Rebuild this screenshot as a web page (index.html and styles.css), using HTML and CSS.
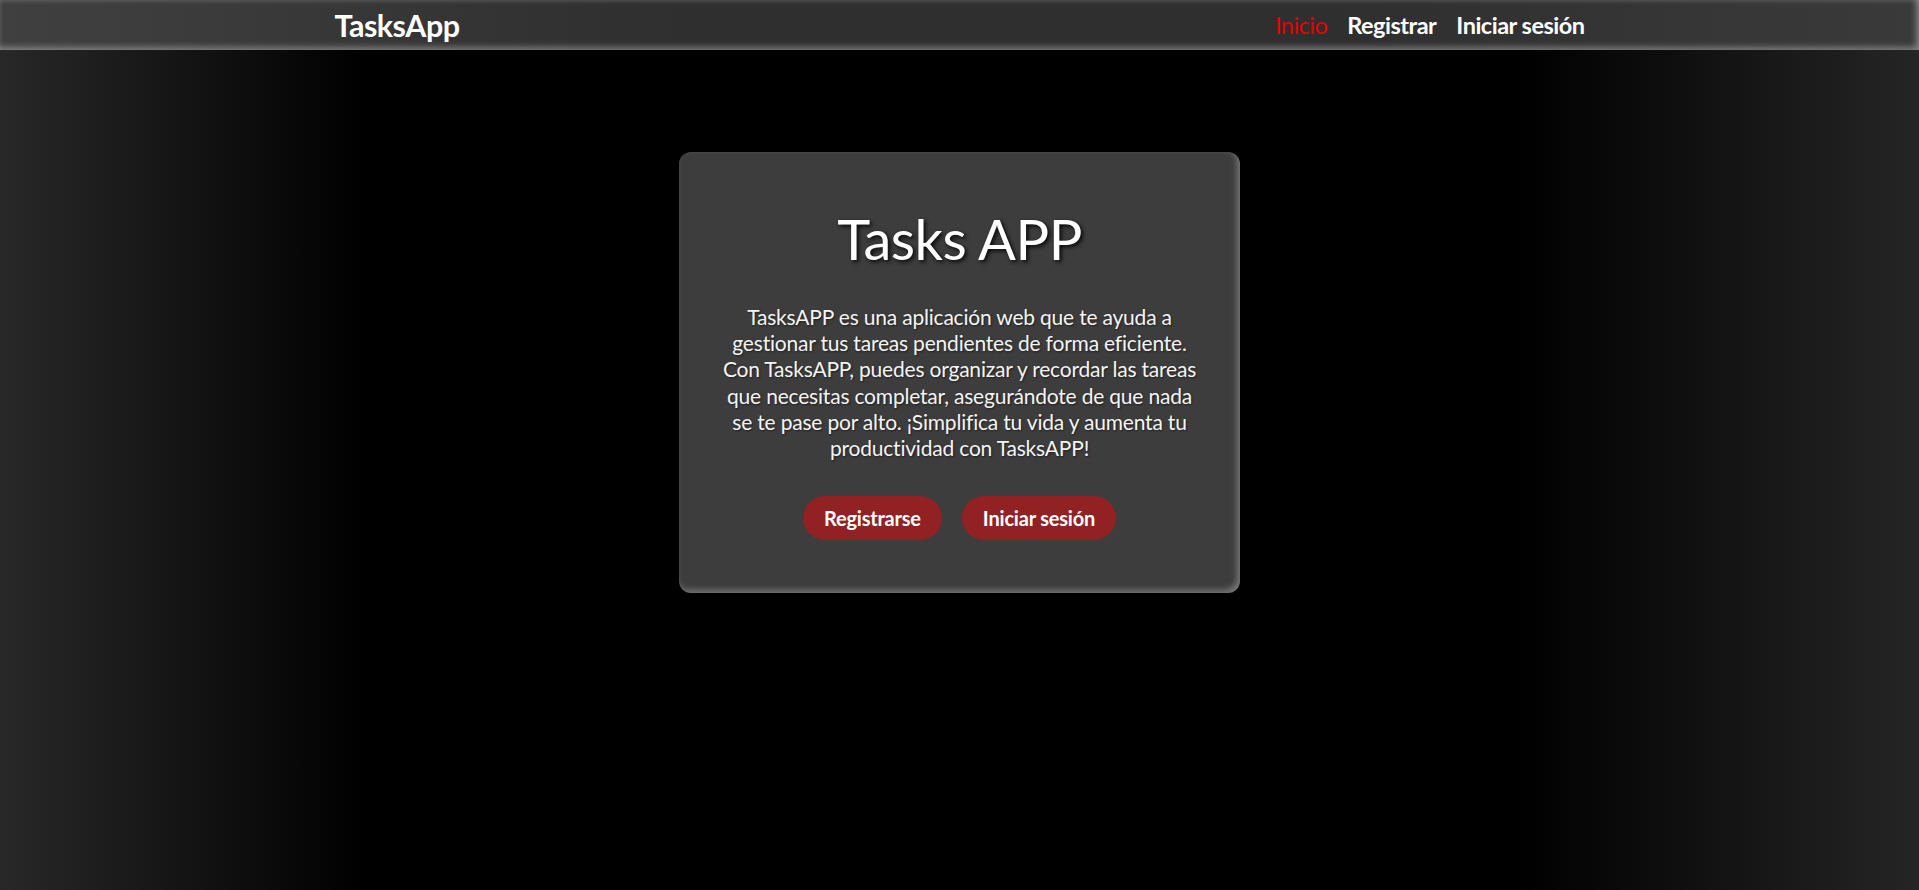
FILE: index.html
```html
<!DOCTYPE html>
<html lang="es">
<head>
<meta charset="utf-8">
<title>TasksApp</title>
<link rel="stylesheet" href="styles.css">
</head>
<body>
<header class="navbar">
  <div class="nav-inner">
    <a class="brand" href="#">TasksApp</a>
    <nav class="nav-links">
      <a class="nav-link active" href="#">Inicio</a>
      <a class="nav-link" href="#">Registrar</a>
      <a class="nav-link" href="#">Iniciar sesión</a>
    </nav>
  </div>
</header>
<main class="main">
  <section class="card">
    <h1 class="title">Tasks APP</h1>
    <p class="desc">TasksAPP es una aplicación web que te ayuda a gestionar tus tareas pendientes de forma eficiente. Con TasksAPP, puedes organizar y recordar las tareas que necesitas completar, asegurándote de que nada se te pase por alto. ¡Simplifica tu vida y aumenta tu productividad con TasksAPP!</p>
    <div class="actions">
      <a class="btn" href="#">Registrarse</a>
      <a class="btn" href="#">Iniciar sesión</a>
    </div>
  </section>
</main>
</body>
</html>
```

FILE: styles.css
```css
* { box-sizing: border-box; }
html, body { margin: 0; padding: 0; }
body {
  min-height: 100vh;
  font-family: Lato, "Open Sans", sans-serif;
  color: #fff;
  background: linear-gradient(to right, #282828 0%, #000 19%, #000 79%, #252525 100%);
}
a { text-decoration: none; color: inherit; }

.navbar {
  height: 50px;
  background: linear-gradient(to right, #404040 0%, #2f2f2f 35%, #2f2f2f 70%, #3a3a3a 100%);
  box-shadow: inset -3px -3px 6px rgba(255,255,255,0.35), inset 0 2px 4px rgba(255,255,255,0.1);
}
.nav-inner {
  width: 1250px;
  height: 100%;
  margin: 0 auto;
  display: flex;
  align-items: center;
  justify-content: space-between;
}
.brand {
  font-size: 30.5px;
  font-weight: 700;
  color: #fff;
  letter-spacing: -0.5px;
}
.nav-links {
  display: flex;
  gap: 20px;
  align-items: center;
}
.nav-link {
  font-size: 23.5px;
  font-weight: 700;
  color: #fff;
  letter-spacing: -0.5px;
}
.nav-link.active { color: #e60000; font-weight: 400; }

.main {
  padding-top: 102px;
  display: flex;
  justify-content: center;
}
.card {
  width: 561px;
  height: 441px;
  background: #3d3d3d;
  border-radius: 12px;
  padding: 47px 41px 0;
  text-align: center;
  box-shadow: inset -3px -3px 6px rgba(255,255,255,0.3);
}
.title {
  margin: 0;
  font-size: 56px;
  font-weight: 400;
  line-height: 80px;
  letter-spacing: -0.5px;
  text-shadow: 2px 2px 4px rgba(0,0,0,0.9);
}
.desc {
  margin: 25px 0 0;
  font-size: 21px;
  line-height: 26.2px;
  letter-spacing: -0.2px;
  color: #f4f4f4;
  text-shadow: 1px 1px 2px rgba(0,0,0,0.5);
}
.actions {
  margin-top: 35px;
  display: flex;
  justify-content: center;
  gap: 20px;
}
.btn {
  height: 44px;
  padding: 0 21px;
  display: inline-flex;
  align-items: center;
  border-radius: 22px;
  background: #922124;
  color: #fff;
  font-size: 20px;
  font-weight: 700;
  letter-spacing: -0.2px;
}
```
